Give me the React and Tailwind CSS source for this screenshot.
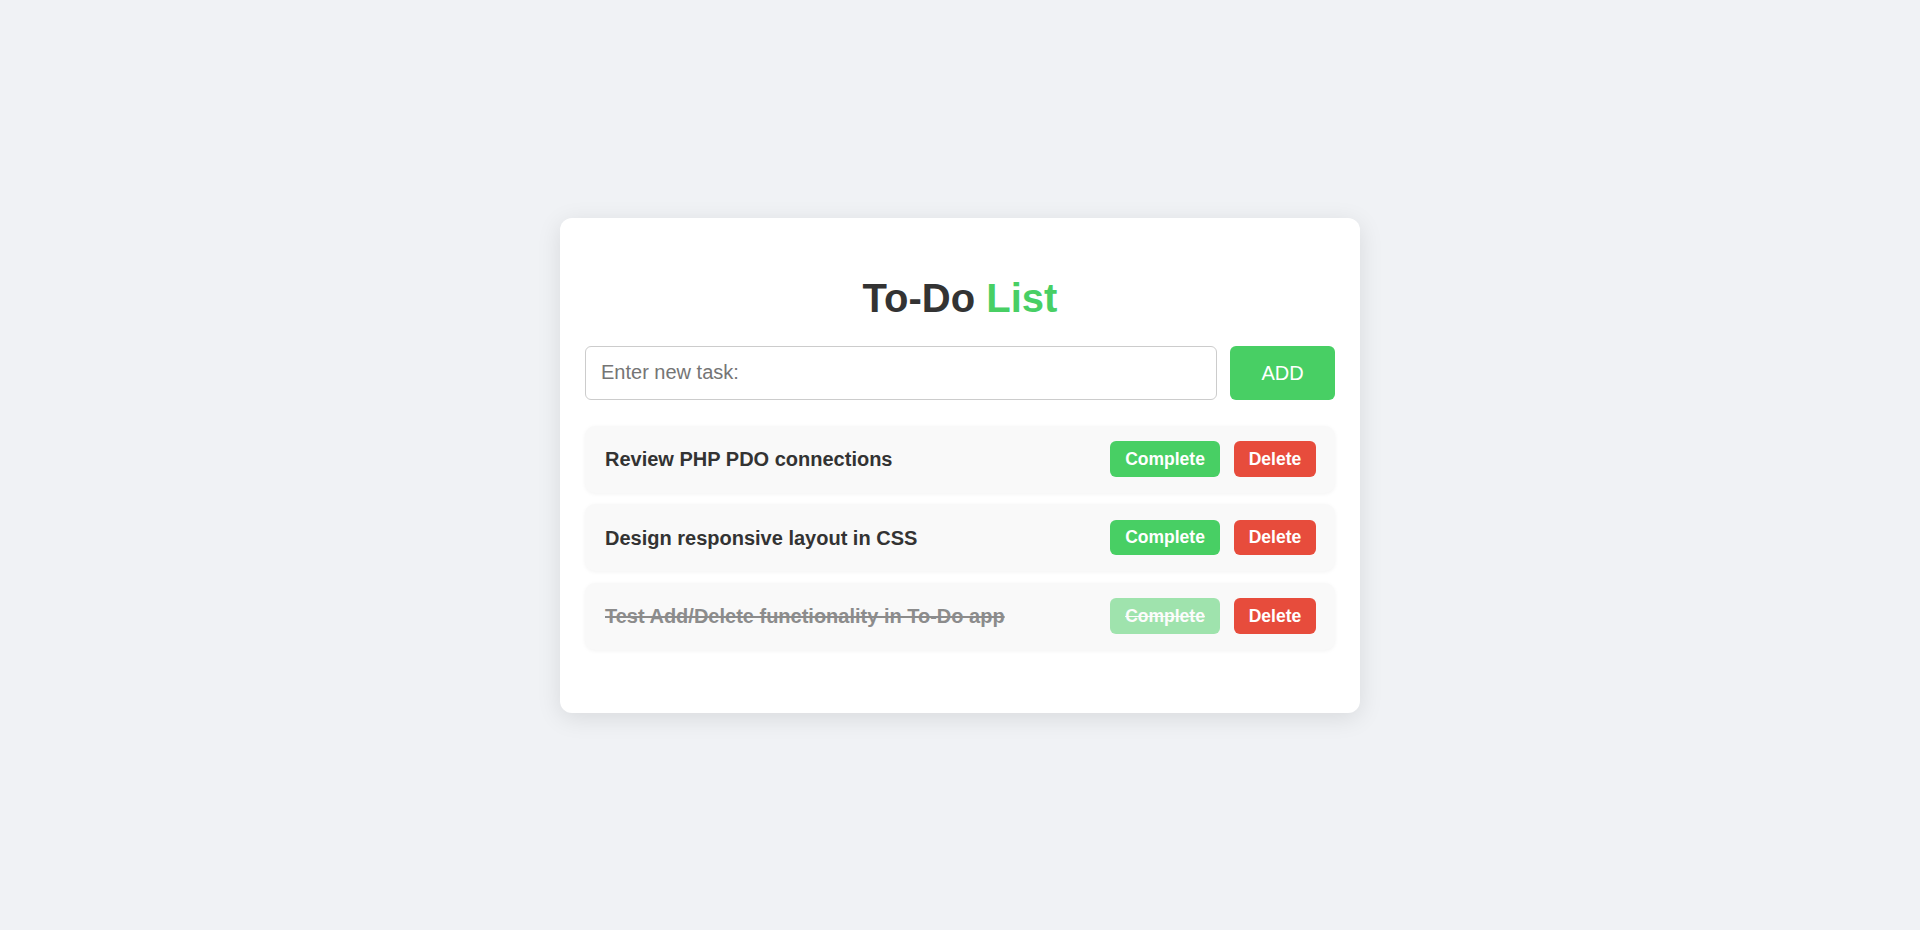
import { useState } from 'react';

const initialTasks = [
  { id: 1, text: 'Review PHP PDO connections', done: false },
  { id: 2, text: 'Design responsive layout in CSS', done: false },
  { id: 3, text: 'Test Add/Delete functionality in To-Do app', done: true },
];

export default function App() {
  const [tasks, setTasks] = useState(initialTasks);
  const [value, setValue] = useState('');

  const add = () => {
    const t = value.trim();
    if (!t) return;
    setTasks([...tasks, { id: Date.now(), text: t, done: false }]);
    setValue('');
  };

  return (
    <div className="flex min-h-screen items-center justify-center bg-[#f0f2f5] font-['Liberation_Sans',Arial,sans-serif]">
      <div className="w-[800px] rounded-[12px] bg-white px-[25px] pb-[63px] pt-[57px] shadow-[0_5px_25px_rgba(0,0,0,0.1)]">
        <h1 className="mb-[25px] text-center text-[40px] font-bold leading-[46px] text-[#333]">
          To-Do <span className="text-[#48cf64]">List</span>
        </h1>

        <div className="flex gap-[13px]">
          <input
            value={value}
            onChange={(e) => setValue(e.target.value)}
            placeholder="Enter new task:"
            className="h-[54px] flex-1 rounded-[6px] border border-[#ccc] px-[15px] text-[20px] text-[#333] outline-none placeholder:text-[#757575]"
          />
          <button
            onClick={add}
            className="h-[54px] w-[105px] rounded-[6px] bg-[#48cf64] text-[20px] text-white"
          >
            ADD
          </button>
        </div>

        <ul className="mt-[26px] flex flex-col gap-[11.5px]">
          {tasks.map((t) => (
            <li
              key={t.id}
              className="flex h-[67px] items-center justify-between rounded-[10px] bg-[#f9f9f9] pl-[20px] pr-[19px] shadow-[0_1px_4px_rgba(0,0,0,0.05)]"
            >
              <span
                className={
                  t.done
                    ? 'text-[20px] font-bold text-[#8c8c8c] line-through'
                    : 'text-[20px] font-bold text-[#333]'
                }
              >
                {t.text}
              </span>
              <div className="flex gap-[14px]">
                <button
                  onClick={() =>
                    setTasks(tasks.map((x) => (x.id === t.id ? { ...x, done: !x.done } : x)))
                  }
                  className={
                    t.done
                      ? 'h-[35.5px] w-[110px] rounded-[6px] bg-[#48cf64] text-[17.5px] font-bold text-white line-through opacity-50'
                      : 'h-[35.5px] w-[110px] rounded-[6px] bg-[#48cf64] text-[17.5px] font-bold text-white'
                  }
                >
                  Complete
                </button>
                <button
                  onClick={() => setTasks(tasks.filter((x) => x.id !== t.id))}
                  className="h-[35.5px] w-[82px] rounded-[6px] bg-[#e74c3c] text-[17.5px] font-bold text-white"
                >
                  Delete
                </button>
              </div>
            </li>
          ))}
        </ul>
      </div>
    </div>
  );
}
